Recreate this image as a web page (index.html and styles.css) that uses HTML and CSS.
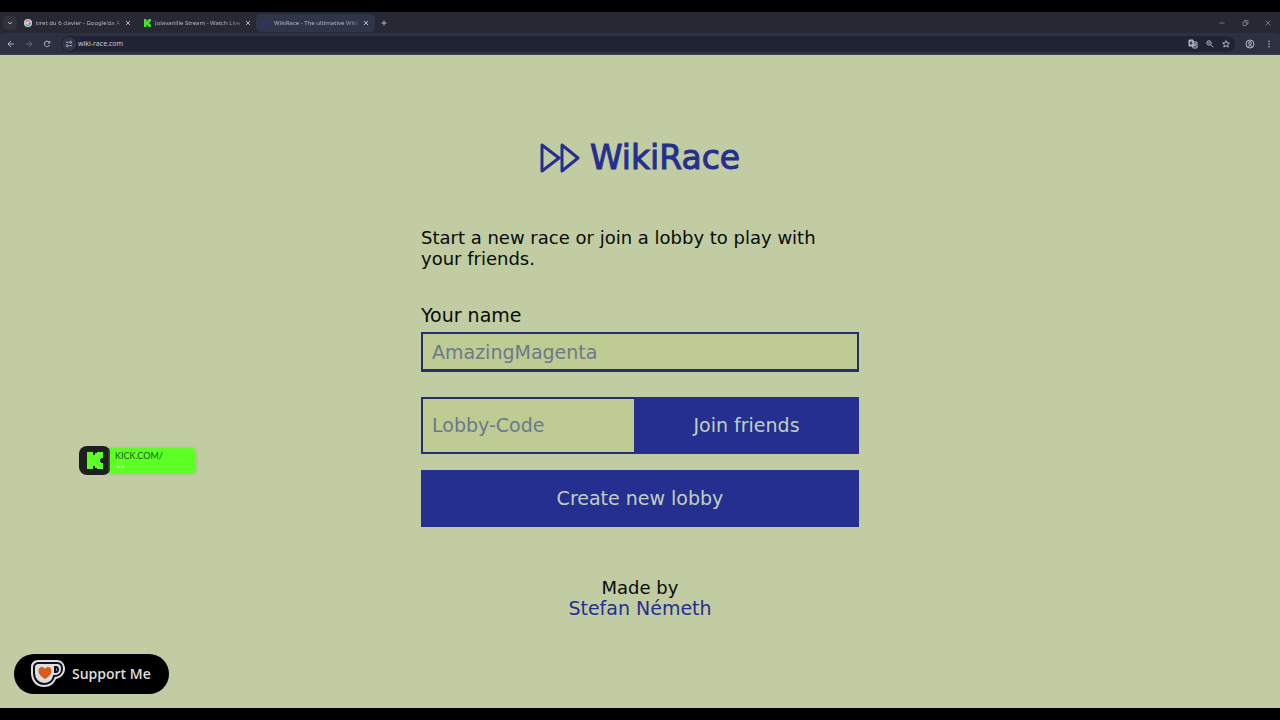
FILE: index.html
```html
<!DOCTYPE html>
<html lang="en">
<head>
<meta charset="utf-8">
<title>WikiRace</title>
<link rel="stylesheet" href="styles.css">
</head>
<body>
<header class="browser">
  <div class="tabs">
    <button class="tab-search" aria-label="Search tabs"><svg class="icon" viewBox="0 0 8 8"><path d="M2 3l2 2 2-2"/></svg></button>
    <div class="tab">
      <svg class="favicon" viewBox="0 0 8 8"><circle cx="4" cy="4" r="4" fill="#d9dade"/><g fill="none" stroke-width="1.2"><path d="M1.9 2.7A2.5 2.5 0 0 1 5.8 2.2" stroke="#dc4c40"/><path d="M1.8 2.9A2.5 2.5 0 0 0 1.9 5.3" stroke="#dfb33a"/><path d="M2 5.4A2.5 2.5 0 0 0 5.5 6" stroke="#3c9c58"/><path d="M5.6 5.9A2.5 2.5 0 0 0 6.5 4H4" stroke="#4879d4"/></g></svg>
      <span class="tab-title">tıret du 6 clavier - Google'da A</span>
      <button class="close" aria-label="Close tab"><svg class="icon" viewBox="0 0 8 8"><path d="M2 2l4 4M6 2l-4 4"/></svg></button>
    </div>
    <div class="tab">
      <svg class="favicon" viewBox="0 0 8 8"><path fill="#42e627" d="M1 0h2.500v2H4.500V1h1V0H8v2.500H7v1H6v1h1v1h1V8H5.500V7h-1V6h-1v2H1z"/></svg>
      <span class="tab-title">Jolavanille Stream - Watch Live</span>
      <button class="close" aria-label="Close tab"><svg class="icon" viewBox="0 0 8 8"><path d="M2 2l4 4M6 2l-4 4"/></svg></button>
    </div>
    <div class="tab tab-active">
      <svg class="favicon" viewBox="0 0 8 8"><path d="M1 2l3 2-3 2zM4 2l3 2-3 2z" fill="none" stroke="#30318b"/></svg>
      <span class="tab-title">WikiRace - The ultimative Wiki</span>
      <button class="close" aria-label="Close tab"><svg class="icon" viewBox="0 0 8 8"><path d="M2 2l4 4M6 2l-4 4"/></svg></button>
    </div>
    <button class="new-tab" aria-label="New tab"><svg class="icon" viewBox="0 0 8 8"><path d="M4 1.500v5M1.500 4h5"/></svg></button>
    <div class="window-controls">
      <button aria-label="Minimize"><svg class="icon" viewBox="0 0 8 8"><path d="M1.500 4h5"/></svg></button>
      <button aria-label="Restore"><svg class="icon" viewBox="0 0 8 8"><path d="M2 3h3.500v3.500H2zM3.500 3V1.500H7V5H5.500"/></svg></button>
      <button aria-label="Close"><svg class="icon" viewBox="0 0 8 8"><path d="M1.500 1.500l5 5M6.500 1.500l-5 5"/></svg></button>
    </div>
  </div>
  <div class="toolbar">
    <button aria-label="Back"><svg class="icon" viewBox="0 0 8 8"><path d="M7 4H1.200M4 1L1 4l3 3"/></svg></button>
    <button class="dim" aria-label="Forward"><svg class="icon" viewBox="0 0 8 8"><path d="M1 4h5.800M4 1l3 3-3 3"/></svg></button>
    <button aria-label="Reload"><svg class="icon" viewBox="0 0 8 8"><path d="M6.500 5A2.700 2.700 0 1 1 6.200 2.300M6.800 1v2H4.800"/></svg></button>
    <div class="address">
      <button class="site-info" aria-label="Site information"><svg class="icon" viewBox="0 0 8 8"><path d="M1 2.300h2.500M4.500 5.700H7"/><circle cx="5.600" cy="2.300" r="1"/><circle cx="2.400" cy="5.700" r="1"/></svg></button>
      <input class="url" type="text" aria-label="Address" value="wiki-race.com">
      <button aria-label="Translate"><svg class="icon icon-large" viewBox="0 0 10 10"><path fill="#a8acb8" d="M1 1h4l1 6H1z"/><path d="M5.500 3H9v6H5L4.500 7M6 5h2.500M7.200 4.500v1c0 1-.7 1.700-1.200 2M6.500 6l1.700 1.700"/><path stroke="#24283a" d="M4 3H2.500v2H4V4H3.300"/></svg></button>
      <button aria-label="Zoom"><svg class="icon" viewBox="0 0 8 8"><circle cx="3" cy="3" r="2.200"/><path d="M4.600 4.600L7.300 7.300M2 3h2"/></svg></button>
      <button aria-label="Bookmark"><svg class="icon" viewBox="0 0 8 8"><path d="M4 .7l1 2.200 2.400.2-1.800 1.600.6 2.400L4 5.800 1.800 7.100l.6-2.400L.6 3.100 3 2.900z"/></svg></button>
    </div>
    <button aria-label="Profile"><svg class="icon icon-large" viewBox="0 0 10 10"><circle cx="5" cy="5" r="4"/><circle cx="5" cy="4" r="1.400"/><path d="M2.300 7.700Q5 5.200 7.700 7.700"/></svg></button>
    <button aria-label="Menu"><svg class="icon" viewBox="0 0 8 8"><g fill="#b5b8c1" stroke="none"><circle cx="4" cy="1.200" r=".8"/><circle cx="4" cy="4" r=".8"/><circle cx="4" cy="6.800" r=".8"/></g></svg></button>
  </div>
</header>
<div class="page">
  <main class="lobby">
    <h1 class="brand">
      <svg class="brand-icon" viewBox="0 0 40 30"><path d="M2 2l17 13L2 28zM22 2l16 13-16 13z"/></svg>
      <span>WikiRace</span>
    </h1>
    <p class="intro">Start a new race or join a lobby to play with your friends.</p>
    <form class="form">
      <label for="name">Your name</label>
      <input class="field name-field" id="name" type="text" placeholder="AmazingMagenta">
      <div class="join">
        <input class="field" type="text" aria-label="Lobby code" placeholder="Lobby-Code">
        <button class="action" type="button">Join friends</button>
      </div>
      <button class="action create" type="button">Create new lobby</button>
    </form>
    <footer class="credit">Made by<br><a href="#">Stefan Németh</a></footer>
  </main>
  <div class="kick">
    <svg class="kick-logo" viewBox="0 0 32 29"><rect width="32" height="29" rx="8" fill="#1d1f20"/><path fill="#5dff24" d="M8 6h6v3h2V7h2V6h6v6h-2v1h-1v3h1v1h2v6h-6v-1h-2v-2h-2v3H8z"/></svg>
    <div class="kick-text"><span>KICK.COM/</span><span class="kick-dots">▪ ▪</span></div>
  </div>
  <button class="support">
    <svg class="cup" viewBox="0 0 36 28"><path fill="#dedede" d="M8 0h19c5 0 8 4 8 9 0 5-4 9-9 10-2 5-6 8-12 8C6 27 1 21 1 13V7c0-4 3-7 7-7z"/><path fill="#dedede" stroke="#11131c" stroke-width="2" d="M8 3h19c3 0 5 2 5 6s-3 7-8 7c-1 5-5 8-10 8C8 24 4 19 4 13V7c0-2 2-4 4-4z"/><path fill="#11131c" d="M24 6h2c4 0 4 7 0 7h-2z"/><path fill="#dedede" d="M26 8c1 0 1 3 0 3z"/><path fill="#d95b1c" d="M15 19C10 16 8.500 13.500 8.500 11 8.500 6.500 13 6 15 9 17 6 21.500 6.500 21.500 11 21.500 13.500 20 16 15 19z"/></svg>
    <span>Support Me</span>
  </button>
</div>
</body>
</html>
```
FILE: styles.css
```css
* { box-sizing: border-box; }
body {
  margin: 0;
  min-height: 100vh;
  padding: 12px 0;
  display: flex;
  flex-direction: column;
  background: #000;
  color: #070b07;
  font: 18px/21px "DejaVu Sans", sans-serif;
}
button, input { font: inherit; color: inherit; margin: 0; border: 0; padding: 0; background: none; }
button { cursor: pointer; }
.icon { display: block; width: 8px; height: 8px; fill: none; stroke: currentColor; stroke-width: 1; }
.icon-large { width: 10px; height: 10px; }

.browser { background: #262933; color: #b5b8c1; font: 6px/10px "Noto Sans", sans-serif; border-bottom: 1px solid #41434b; }
.tabs { display: flex; align-items: center; height: 21px; padding-left: 3px; }
.tab-search { display: grid; place-items: center; width: 14px; height: 14px; border-radius: 5px; background: #30333a; margin-right: 1px; }
.tab { display: flex; align-items: center; gap: 4px; width: 119px; height: 18px; padding: 0 5px 0 6px; border-radius: 5px; }
.tab-active { background: #31354a; }
.favicon { flex: none; width: 8px; height: 8px; }
.tab-title { flex: 1; white-space: nowrap; mask-image: linear-gradient(90deg, #000 85%, #0006); }
.new-tab { margin-left: 5px; }
.window-controls { display: flex; gap: 15px; margin-left: auto; padding-right: 8px; color: #737680; }
.toolbar { display: flex; align-items: center; gap: 10px; height: 21px; padding: 0 7px; background: #2c3042; border-radius: 4px 4px 0 0; }
.dim { color: #666a78; }
.address { display: flex; flex: 1; align-items: center; gap: 8px; height: 16px; padding: 0 5px 0 1px; border-radius: 8px; background: #202335; }
.site-info { display: grid; place-items: center; width: 14px; height: 14px; border-radius: 7px; background: #303446; }
.url { flex: 1; min-width: 0; margin-left: -6px; color: #c6c9d1; font-size: 7px; }

.page { position: relative; flex: 1; padding: 86px 16px 40px; background: #c1cca2; }
.lobby { width: 100%; max-width: 438px; margin: 0 auto; }
.brand { display: flex; align-items: center; justify-content: center; gap: 10px; margin: 0 0 52px; color: #252f90; font-size: 33px; font-weight: 400; line-height: 34px; -webkit-text-stroke: 1px; }
.brand-icon { width: 40px; height: 30px; fill: none; stroke: currentColor; stroke-width: 3; stroke-linejoin: round; }
.intro { max-width: 420px; margin: 0 0 36px; }
.form { display: flex; flex-direction: column; font-size: 19px; }
.form label { margin-bottom: 6px; }
.field { min-width: 0; padding: 0 9px; border: 2px solid #252f70; border-radius: 0; background: #becb93; }
.field::placeholder { color: #6b7989; opacity: 1; }
.name-field { height: 40px; margin-bottom: 25px; border-bottom-width: 3px; }
.join { display: grid; grid-template-columns: 213px 1fr; height: 57px; margin-bottom: 16px; }
.join .field { border-right: 0; }
.action { background: #252f90; color: #c0d0c0; }
.create { height: 57px; }
.credit { margin-top: 50px; text-align: center; }
.credit a { color: #252f90; text-decoration: none; font-size: 19px; }

.kick { position: absolute; left: 79px; top: 391px; display: flex; align-items: center; }
.kick-logo { width: 32px; height: 29px; }
.kick-text { display: flex; flex-direction: column; width: 86px; height: 26px; margin-left: -1px; padding: 3px 5px; border-radius: 0 5px 5px 0; background: #5dff24; box-shadow: 0 0 3px #93bd78; color: #176414; font: 9px/10px Lato, sans-serif; }
.kick-dots { color: #c9ffad; font-size: 7px; padding-left: 2px; }
.support { position: absolute; left: 14px; bottom: 14px; display: flex; align-items: center; gap: 6px; height: 40px; padding: 0 18px 0 16px; border-radius: 20px; background: #000; color: #dedede; font: 600 14px/20px "Open Sans", sans-serif; white-space: nowrap; }
.cup { width: 36px; height: 28px; }
```
